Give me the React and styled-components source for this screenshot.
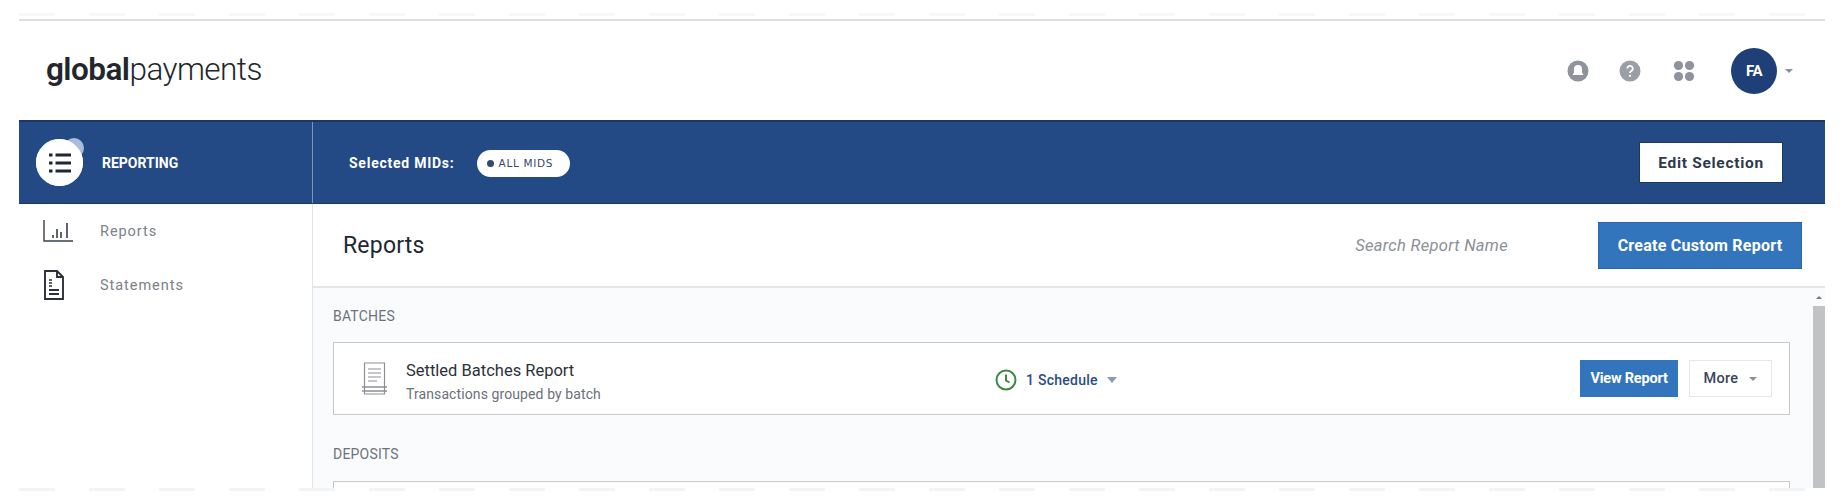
import React from 'react';
import styled, { createGlobalStyle } from 'styled-components';

const navy = '#234a84';
const blue = '#3375bd';

const GlobalStyle = createGlobalStyle`
  html, body {
    margin: 0;
    padding: 0;
    background: #fff;
  }
  body {
    font-family: Roboto, "Liberation Sans", sans-serif;
    color: #2b3442;
  }
`;

const Page = styled.div`
  width: 1846px;
  height: 504px;
  padding: 13px 21px 0 19px;
  box-sizing: border-box;
  overflow: hidden;
`;

// faint dashed capture marks above and below the frame
const DashStrip = styled.div`
  height: 3px;
  margin: ${(p) => p.$margin};
  background: repeating-linear-gradient(90deg, ${(p) => p.$color} 0 36px, transparent 36px 70px);
`;

const Frame = styled.div`
  height: 469px;
  display: flex;
  flex-direction: column;
  border-top: 2px solid #dedfe1;
  box-sizing: border-box;
`;

const TopBar = styled.header`
  height: 99px;
  flex: none;
  display: flex;
  align-items: center;
  justify-content: space-between;
  padding: 0 32px 0 27px;
  box-sizing: border-box;
`;

const Logo = styled.div`
  font-size: 31.5px;
  font-weight: 300;
  letter-spacing: -0.55px;
  color: #23262b;
  margin-bottom: 2px;

  b {
    font-weight: 600;
  }
`;

const TopIcons = styled.div`
  display: flex;
  align-items: center;
`;

const RoundIcon = styled.span`
  width: 22px;
  height: 22px;
  display: flex;
  align-items: center;
  justify-content: center;
  margin-right: ${(p) => p.$gap}px;
`;

const Avatar = styled.div`
  width: 46px;
  height: 46px;
  border-radius: 50%;
  background: #1e3f77;
  color: #fff;
  font-size: 15px;
  font-weight: 700;
  letter-spacing: -0.5px;
  display: flex;
  align-items: center;
  justify-content: center;
  margin-right: 8px;
`;

const SmallCaret = styled.span`
  width: 0;
  height: 0;
  border-left: 4px solid transparent;
  border-right: 4px solid transparent;
  border-top: 4px solid ${(p) => p.$color || '#8a8f98'};
`;

const BlueBar = styled.div`
  height: 84px;
  flex: none;
  display: flex;
  background: ${navy};
  border-top: 2px solid #1b3764;
  border-bottom: 1px solid #1b3764;
  box-sizing: border-box;
`;

const ModuleCell = styled.div`
  width: 294px;
  flex: none;
  display: flex;
  align-items: center;
  padding-left: 17px;
  box-sizing: border-box;
  border-right: 1px solid #7d95ba;
`;

const ModuleBadge = styled.div`
  position: relative;
  width: 47px;
  height: 47px;
  border-radius: 50%;
  background: #fff;
  display: flex;
  align-items: center;
  justify-content: center;
  margin-right: 19px;

  &::before {
    content: '';
    position: absolute;
    top: -1px;
    right: -1px;
    width: 20px;
    height: 20px;
    border-radius: 50%;
    background: #a9bcd8;
    z-index: 0;
  }

  &::after {
    content: '';
    position: absolute;
    inset: 0;
    border-radius: 50%;
    background: #fff;
    z-index: 1;
  }

  svg {
    position: relative;
    z-index: 2;
  }
`;

const ModuleName = styled.span`
  color: #fff;
  font-size: 14px;
  font-weight: 700;
  letter-spacing: 0;
`;

const MidCell = styled.div`
  flex: 1;
  display: flex;
  align-items: center;
  padding: 0 42px 0 36px;
`;

const MidLabel = styled.span`
  color: #fff;
  font-size: 14px;
  font-weight: 700;
  letter-spacing: 0.75px;
  margin-right: 22px;
`;

const MidPill = styled.span`
  width: 93px;
  height: 27px;
  margin-top: 1px;
  border-radius: 14px;
  background: #fff;
  display: flex;
  align-items: center;
  padding-left: 10px;
  box-sizing: border-box;
  color: #33496e;
  font-family: "DejaVu Sans", sans-serif;
  font-size: 10.5px;
  letter-spacing: 0.7px;
  white-space: nowrap;

  i {
    width: 7px;
    height: 7px;
    border-radius: 50%;
    background: #33496e;
    margin-right: 5px;
    flex: none;
  }
`;

const EditButton = styled.button`
  margin-left: auto;
  width: 144px;
  height: 41px;
  border: 1px solid #1b3764;
  background: #fff;
  color: #2d3a4d;
  font: 700 15.5px Roboto, sans-serif;
  letter-spacing: 0.7px;
  padding: 0;
`;

const Body = styled.div`
  flex: 1;
  min-height: 0;
  display: flex;
`;

const Sidebar = styled.nav`
  width: 294px;
  flex: none;
  padding: 12px 0 0 24px;
  box-sizing: border-box;
  border-right: 1px solid #e3e4e7;
  display: flex;
  flex-direction: column;
  gap: 24px;
`;

const SideLink = styled.a`
  display: flex;
  align-items: center;
  height: 30px;
  color: #7b8189;
  font-size: 14.5px;
  letter-spacing: 0.95px;
`;

const SideIcon = styled.span`
  width: 57px;
  flex: none;
  display: flex;
`;

const Main = styled.main`
  flex: 1;
  min-width: 0;
  display: flex;
  flex-direction: column;
`;

const TitleRow = styled.div`
  height: 84px;
  flex: none;
  display: flex;
  align-items: center;
  padding: 0 23px 0 30px;
  box-sizing: border-box;
  border-bottom: 2px solid #e4e5e8;
`;

const PageTitle = styled.h1`
  margin: 0;
  font-size: 23px;
  font-weight: 400;
  letter-spacing: 0.2px;
  color: #1f2733;
`;

const SearchHint = styled.span`
  margin-left: auto;
  margin-right: 90px;
  color: #8b8f96;
  font-size: 16.5px;
  font-style: italic;
  letter-spacing: 0.3px;
`;

const CreateButton = styled.button`
  width: 204px;
  height: 47px;
  border: 1px solid #2a66a8;
  background: ${blue};
  color: #fff;
  font: 700 16px Roboto, sans-serif;
  letter-spacing: 0.25px;
  padding: 0;
  white-space: nowrap;
`;

const ScrollArea = styled.div`
  flex: 1;
  min-height: 0;
  display: flex;
  background: #fafbfd;
  overflow: hidden;
`;

const Sections = styled.div`
  flex: 1;
  min-width: 0;
  padding: 18px 23px 0 20px;
`;

const SectionLabel = styled.div`
  height: 20px;
  line-height: 20px;
  font-size: 14px;
  color: #6d7279;
  letter-spacing: 0.2px;
  margin-bottom: ${(p) => p.$after}px;
`;

const ReportCard = styled.div`
  height: 73px;
  box-sizing: border-box;
  border: 1px solid #c4c7cc;
  background: #fff;
  display: flex;
  align-items: center;
  padding: 0 17px 0 28px;
  margin-bottom: 29px;
`;

const CardInfo = styled.div`
  width: 589px;
  flex: none;
  margin-left: 19px;
  padding-top: 5px;
`;

const CardTitle = styled.div`
  font-size: 16.5px;
  color: #2c3138;
  margin-bottom: 6px;
`;

const CardSub = styled.div`
  font-size: 14px;
  letter-spacing: 0.1px;
  color: #6b7078;
`;

const Schedule = styled.div`
  display: flex;
  align-items: center;
  color: #2b4c80;
  font-size: 14px;
  font-weight: 500;
  letter-spacing: 0.25px;
  padding-top: 2px;

  svg {
    margin-right: 9px;
  }
`;

const ScheduleCaret = styled.span`
  margin-left: 9px;
  width: 0;
  height: 0;
  border-left: 5px solid transparent;
  border-right: 5px solid transparent;
  border-top: 6px solid #8a9ab5;
`;

const ViewButton = styled.button`
  margin-left: auto;
  width: 98px;
  height: 37px;
  border: none;
  background: ${blue};
  color: #fff;
  font: 700 14.5px Roboto, sans-serif;
  letter-spacing: -0.2px;
  padding: 0;
  white-space: nowrap;
`;

const MoreButton = styled.button`
  margin-left: 11px;
  width: 83px;
  height: 37px;
  border: 1px solid #e6e7ea;
  background: #fff;
  color: #3a4658;
  font: 500 14.5px Roboto, sans-serif;
  letter-spacing: 0.3px;
  display: flex;
  align-items: center;
  justify-content: center;
  gap: 11px;
  padding: 0;
`;

const Scrollbar = styled.div`
  width: 12px;
  flex: none;
  display: flex;
  flex-direction: column;
  align-items: center;
`;

const ScrollArrow = styled.span`
  margin-top: 8px;
  margin-bottom: 7px;
  width: 0;
  height: 0;
  border-left: 3px solid transparent;
  border-right: 3px solid transparent;
  border-bottom: 3px solid #777;
`;

const ScrollThumb = styled.div`
  flex: 1;
  width: 100%;
  background: #c1c2c4;
`;

const BellIcon = () => (
  <svg width="22" height="22" viewBox="0 0 22 22">
    <circle cx="11" cy="11" r="10.5" fill="#8f939c" />
    <path d="M11 5a4 4 0 0 0-4 4v3.5L5.5 15h11L15 12.5V9a4 4 0 0 0-4-4z" fill="#fff" />
  </svg>
);

const HelpIcon = () => (
  <svg width="22" height="22" viewBox="0 0 22 22">
    <circle cx="11" cy="11" r="10.5" fill="#9a9ea6" />
    <path d="M8.4 8.6a2.7 2.7 0 1 1 3.9 2.4c-.9.5-1.3 1-1.3 2" fill="none" stroke="#fff" strokeWidth="1.8" />
    <circle cx="11" cy="15.8" r="1.1" fill="#fff" />
  </svg>
);

const AppsIcon = () => (
  <svg width="22" height="22" viewBox="0 0 22 22" fill="#8f939c">
    <circle cx="5.5" cy="5.5" r="4.6" />
    <circle cx="16.5" cy="5.5" r="4.6" />
    <circle cx="5.5" cy="16.5" r="4.6" />
    <circle cx="16.5" cy="16.5" r="4.6" />
  </svg>
);

const ListIcon = () => (
  <svg width="24" height="22" viewBox="0 0 24 22" stroke="#1f2733" strokeWidth="2.8" fill="none">
    <path d="M1 3h3.5M1 11h3.5M1 19h3.5M7.5 3H23M7.5 11H23M7.5 19H23" />
  </svg>
);

const ChartIcon = () => (
  <svg width="30" height="22" viewBox="0 0 30 22" stroke="#3a4048" fill="none">
    <path d="M1 0v21h29" strokeWidth="1.4" />
    <path d="M10 18v-3M14 18V9M18 18v-6M24 18V3" strokeWidth="1.6" />
  </svg>
);

const StatementIcon = () => (
  <svg width="22" height="30" viewBox="0 0 22 30" fill="none" stroke="#2b3038" strokeWidth="1.9">
    <path d="M2 1h12l6 6v22H2z" />
    <path d="M14 1v6h6M6 20h10M6 24h10" />
    <path d="M6 10h3M6 13h3M6 16h3" strokeWidth="1.3" />
  </svg>
);

const ReportIcon = () => (
  <svg width="25" height="33" viewBox="0 0 25 33" fill="none" stroke="#8b8f96" strokeWidth="1.2">
    <path d="M2.5 1h20v31h-20z" />
    <path d="M6 7h13M6 11h13M6 15h13M6 19h9" />
    <path d="M0 25h25M0 29h25" strokeWidth="1.5" />
  </svg>
);

const ClockIcon = () => (
  <svg width="22" height="22" viewBox="0 0 22 22" fill="none" stroke="#3d8a3f" strokeWidth="2">
    <circle cx="11" cy="11" r="9.5" />
    <path d="M11 5.5V11.5l3.5 2" />
  </svg>
);

const App = () => {
  return (
    <Page>
      <GlobalStyle />
      <DashStrip $color="#f8f8f8" $margin="0 0 3px" />
      <Frame>
        <TopBar>
          <Logo>
            <b>global</b>payments
          </Logo>
          <TopIcons>
            <RoundIcon $gap={30}>
              <BellIcon />
            </RoundIcon>
            <RoundIcon $gap={32}>
              <HelpIcon />
            </RoundIcon>
            <RoundIcon $gap={36}>
              <AppsIcon />
            </RoundIcon>
            <Avatar>FA</Avatar>
            <SmallCaret />
          </TopIcons>
        </TopBar>

        <BlueBar>
          <ModuleCell>
            <ModuleBadge>
              <ListIcon />
            </ModuleBadge>
            <ModuleName>REPORTING</ModuleName>
          </ModuleCell>
          <MidCell>
            <MidLabel>Selected MIDs:</MidLabel>
            <MidPill>
              <i />
              ALL MIDS
            </MidPill>
            <EditButton>Edit Selection</EditButton>
          </MidCell>
        </BlueBar>

        <Body>
          <Sidebar>
            <SideLink>
              <SideIcon>
                <ChartIcon />
              </SideIcon>
              Reports
            </SideLink>
            <SideLink>
              <SideIcon>
                <StatementIcon />
              </SideIcon>
              Statements
            </SideLink>
          </Sidebar>

          <Main>
            <TitleRow>
              <PageTitle>Reports</PageTitle>
              <SearchHint>Search Report Name</SearchHint>
              <CreateButton>Create Custom Report</CreateButton>
            </TitleRow>

            <ScrollArea>
              <Sections>
                <SectionLabel $after={16}>BATCHES</SectionLabel>
                <ReportCard>
                  <ReportIcon />
                  <CardInfo>
                    <CardTitle>Settled Batches Report</CardTitle>
                    <CardSub>Transactions grouped by batch</CardSub>
                  </CardInfo>
                  <Schedule>
                    <ClockIcon />
                    1 Schedule
                    <ScheduleCaret />
                  </Schedule>
                  <ViewButton>View Report</ViewButton>
                  <MoreButton>
                    More
                    <SmallCaret />
                  </MoreButton>
                </ReportCard>
                <SectionLabel $after={17}>DEPOSITS</SectionLabel>
                <ReportCard />
              </Sections>
              <Scrollbar>
                <ScrollArrow />
                <ScrollThumb />
              </Scrollbar>
            </ScrollArea>
          </Main>
        </Body>
      </Frame>
      <DashStrip $color="#f3f3f3" $margin="0" />
    </Page>
  );
};

export default App;
